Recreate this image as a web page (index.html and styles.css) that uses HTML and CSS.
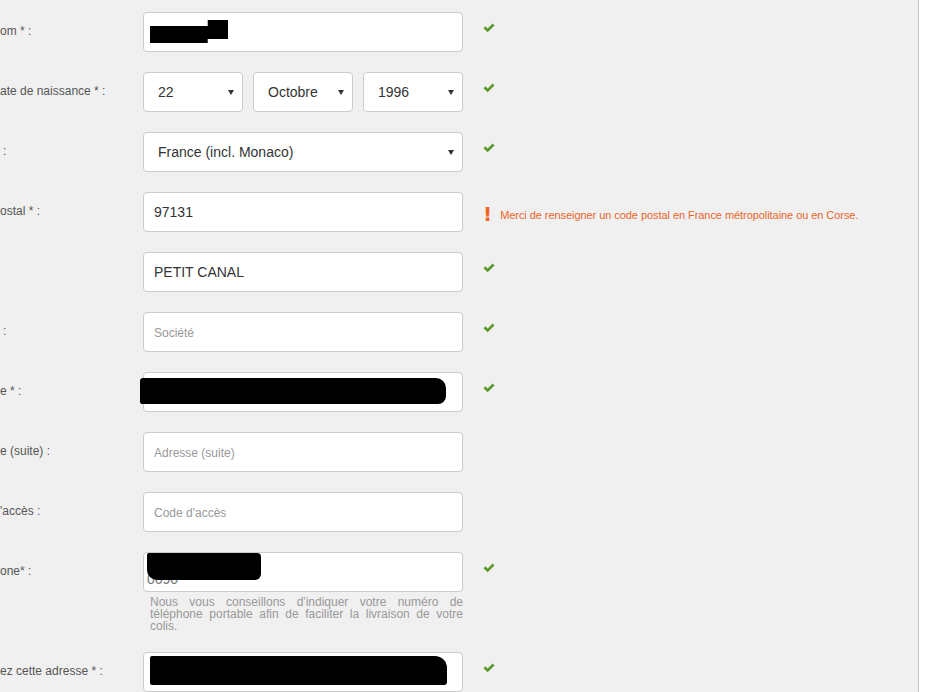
FILE: index.html
```html
<!DOCTYPE html>
<html lang="fr">
<head>
  <meta charset="UTF-8" />
  <meta name="viewport" content="width=device-width, initial-scale=1" />
  <title>Adresse de livraison</title>
  <link rel="stylesheet" href="styles.css">
</head>
<body>
  <div class="panel">
    <form class="address-form">

      <div class="row">
        <label class="label">om * :</label>
        <div class="field">
          <div class="box">
            <input class="input" type="text" value="" />
            <span class="redact redact-name"></span>
          </div>
        </div>
        <div class="status"><span class="check"><svg viewBox="0 0 12 10" width="12" height="10"><path d="M0.5 5.2 L2.4 3.3 L4.6 5.5 L9.6 0.5 L11.5 2.4 L4.6 9.3 Z" fill="#5a9b2b"/></svg></span></div>
      </div>

      <div class="row">
        <label class="label">ate de naissance * :</label>
        <div class="field selects">
          <div class="select-wrap"><select class="select"><option>22</option></select></div>
          <div class="select-wrap"><select class="select"><option>Octobre</option></select></div>
          <div class="select-wrap"><select class="select"><option>1996</option></select></div>
        </div>
        <div class="status"><span class="check"><svg viewBox="0 0 12 10" width="12" height="10"><path d="M0.5 5.2 L2.4 3.3 L4.6 5.5 L9.6 0.5 L11.5 2.4 L4.6 9.3 Z" fill="#5a9b2b"/></svg></span></div>
      </div>

      <div class="row">
        <label class="label label-colon">:</label>
        <div class="field">
          <div class="select-wrap wide"><select class="select"><option>France (incl. Monaco)</option></select></div>
        </div>
        <div class="status"><span class="check"><svg viewBox="0 0 12 10" width="12" height="10"><path d="M0.5 5.2 L2.4 3.3 L4.6 5.5 L9.6 0.5 L11.5 2.4 L4.6 9.3 Z" fill="#5a9b2b"/></svg></span></div>
      </div>

      <div class="row">
        <label class="label">ostal * :</label>
        <div class="field">
          <input class="input" type="text" value="97131" />
        </div>
        <div class="status error">
          <span class="bang">!</span>
          <span class="error-text">Merci de renseigner un code postal en France métropolitaine ou en Corse.</span>
        </div>
      </div>

      <div class="row">
        <label class="label"></label>
        <div class="field">
          <input class="input" type="text" value="PETIT CANAL" />
        </div>
        <div class="status"><span class="check"><svg viewBox="0 0 12 10" width="12" height="10"><path d="M0.5 5.2 L2.4 3.3 L4.6 5.5 L9.6 0.5 L11.5 2.4 L4.6 9.3 Z" fill="#5a9b2b"/></svg></span></div>
      </div>

      <div class="row">
        <label class="label label-colon">:</label>
        <div class="field">
          <input class="input" type="text" placeholder="Société" />
        </div>
        <div class="status"><span class="check"><svg viewBox="0 0 12 10" width="12" height="10"><path d="M0.5 5.2 L2.4 3.3 L4.6 5.5 L9.6 0.5 L11.5 2.4 L4.6 9.3 Z" fill="#5a9b2b"/></svg></span></div>
      </div>

      <div class="row">
        <label class="label">e * :</label>
        <div class="field">
          <div class="box">
            <input class="input" type="text" value="" />
            <span class="redact redact-street"></span>
          </div>
        </div>
        <div class="status"><span class="check"><svg viewBox="0 0 12 10" width="12" height="10"><path d="M0.5 5.2 L2.4 3.3 L4.6 5.5 L9.6 0.5 L11.5 2.4 L4.6 9.3 Z" fill="#5a9b2b"/></svg></span></div>
      </div>

      <div class="row">
        <label class="label">e (suite) :</label>
        <div class="field">
          <input class="input" type="text" placeholder="Adresse (suite)" />
        </div>
        <div class="status"></div>
      </div>

      <div class="row">
        <label class="label">'accès :</label>
        <div class="field">
          <input class="input" type="text" placeholder="Code d'accès" />
        </div>
        <div class="status"></div>
      </div>

      <div class="row">
        <label class="label">one* :</label>
        <div class="field">
          <div class="box">
            <input class="input input-phone" type="text" value="0690" />
            <span class="redact redact-phone"></span>
          </div>
          <p class="hint">Nous vous conseillons d'indiquer votre numéro de téléphone portable afin de faciliter la livraison de votre colis.</p>
        </div>
        <div class="status"><span class="check"><svg viewBox="0 0 12 10" width="12" height="10"><path d="M0.5 5.2 L2.4 3.3 L4.6 5.5 L9.6 0.5 L11.5 2.4 L4.6 9.3 Z" fill="#5a9b2b"/></svg></span></div>
      </div>

      <div class="row">
        <label class="label">ez cette adresse * :</label>
        <div class="field">
          <div class="box">
            <input class="input" type="text" value="" />
            <span class="redact redact-alias"></span>
          </div>
        </div>
        <div class="status"><span class="check"><svg viewBox="0 0 12 10" width="12" height="10"><path d="M0.5 5.2 L2.4 3.3 L4.6 5.5 L9.6 0.5 L11.5 2.4 L4.6 9.3 Z" fill="#5a9b2b"/></svg></span></div>
      </div>

    </form>
  </div>
</body>
</html>
```

FILE: styles.css
```css
html, body {
  margin: 0;
  padding: 0;
  height: 100%;
  background: #fff;
  overflow: hidden;
  font-family: 'Liberation Sans', Arial, sans-serif;
  color: #333;
}

.panel {
  width: 919px;
  min-height: 100%;
  background: #f0f0f0;
  border-right: 1px solid #c8c8c8;
  box-sizing: border-box;
}

.address-form {
  display: flex;
  flex-direction: column;
  gap: 20px;
  padding-top: 12px;
}

.row {
  display: grid;
  grid-template-columns: 143px 320px 1fr;
  align-items: start;
}

.label {
  font-size: 12px;
  line-height: 38px;
  color: #555;
  white-space: nowrap;
  overflow: hidden;
}

.label-colon {
  padding-left: 3px;
}

.field {
  display: flex;
  flex-direction: column;
}

.box {
  position: relative;
}

.input {
  display: block;
  width: 100%;
  height: 40px;
  box-sizing: border-box;
  border: 1px solid #ccc;
  border-radius: 4px;
  background: #fff;
  padding: 0 10px;
  font-family: 'Liberation Sans', Arial, sans-serif;
  font-size: 14px;
  color: #333;
  outline: none;
}

.input::placeholder {
  font-size: 12px;
  color: #999;
}

.input-phone {
  color: #777;
  padding-top: 14px;
  padding-left: 3px;
}

.selects {
  flex-direction: row;
  gap: 10px;
}

.select-wrap {
  position: relative;
  width: 100px;
}

.select-wrap.wide {
  width: 320px;
}

.select-wrap::after {
  content: "";
  position: absolute;
  right: 9px;
  top: 18px;
  border-left: 3px solid transparent;
  border-right: 3px solid transparent;
  border-top: 5px solid #333;
  pointer-events: none;
}

.select {
  -webkit-appearance: none;
  appearance: none;
  display: block;
  width: 100%;
  height: 40px;
  box-sizing: border-box;
  border: 1px solid #ccc;
  border-radius: 4px;
  background: #fff;
  padding: 0 14px;
  font-family: 'Liberation Sans', Arial, sans-serif;
  font-size: 14px;
  color: #333;
  outline: none;
}

.hint {
  margin: 4px 0 0 7px;
  font-size: 12px;
  line-height: 12px;
  color: #999;
  text-align: justify;
}

.status {
  height: 40px;
  box-sizing: border-box;
  padding: 11px 0 0 20px;
  display: flex;
  align-items: flex-start;
}

.check svg {
  display: block;
}

.error {
  padding-top: 9px;
  align-items: center;
  height: 26px;
  box-sizing: content-box;
}

.bang {
  font-family: 'DejaVu Sans', sans-serif;
  font-weight: bold;
  font-size: 20px;
  color: #f0641e;
  margin-right: 8px;
  line-height: 1;
}

.error-text {
  font-size: 11px;
  color: #e8652a;
  padding-top: 2px;
  white-space: nowrap;
  letter-spacing: -0.06px;
}

.redact {
  position: absolute;
  background: #000;
  pointer-events: none;
}

.redact-name {
  left: 7px;
  top: 8px;
  width: 78px;
  height: 23px;
  clip-path: polygon(0 26%, 74% 26%, 74% 0, 100% 0, 100% 83%, 74% 83%, 74% 100%, 0 100%);
}

.redact-street {
  left: -3px;
  top: 6px;
  width: 306px;
  height: 26px;
  border-radius: 3px 10px 8px 2px;
}

.redact-phone {
  left: 4px;
  top: 1px;
  width: 114px;
  height: 27px;
  border-radius: 2px 4px 6px 10px;
}

.redact-alias {
  left: 7px;
  top: 4px;
  width: 297px;
  height: 29px;
  border-radius: 2px 12px 3px 2px;
}
```
